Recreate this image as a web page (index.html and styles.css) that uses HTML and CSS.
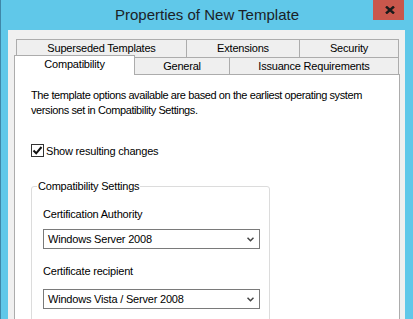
FILE: index.html
```html
<!DOCTYPE html>
<html>
<head>
<meta charset="utf-8">
<link rel="stylesheet" href="styles.css">
</head>
<body>
<div class="window">
  <div class="titlebar">
    <span class="spacer"></span>
    <div class="title">Properties of New Template</div>
    <button class="close" aria-label="Close">
      <svg width="10" height="8" viewBox="0 0 10 8"><path d="M1 0.5 L9 7.5 M9 0.5 L1 7.5" stroke="#1a1a1a" stroke-width="2.4" fill="none"/></svg>
    </button>
  </div>
  <div class="client">
    <div class="tabs">
      <div class="tabrow back">
        <div class="tab w-superseded">Superseded Templates</div>
        <div class="tab w-ext">Extensions</div>
        <div class="tab w-sec">Security</div>
      </div>
      <div class="tabrow front">
        <div class="tab selected w-compat">Compatibility</div>
        <div class="tab w-general">General</div>
        <div class="tab w-issuance">Issuance Requirements</div>
      </div>
    </div>
    <div class="panel">
      <p class="intro">The template options available are based on the earliest operating system<br>versions set in Compatibility Settings.</p>
      <label class="check">
        <span class="box"><svg width="11" height="11" viewBox="0 0 11 11"><path d="M1.5 5.5 L4.2 8.3 L9.5 2" stroke="#111" stroke-width="2" fill="none"/></svg></span>
        <span>Show resulting changes</span>
      </label>
      <fieldset class="group">
        <legend>Compatibility Settings</legend>
        <div class="field-label first">Certification Authority</div>
        <div class="combo first-combo">
          <span>Windows Server 2008</span>
          <svg width="7" height="5" viewBox="0 0 7 5"><path d="M0.5 0.8 L3.5 3.8 L6.5 0.8" stroke="#444" stroke-width="1.5" fill="none"/></svg>
        </div>
        <div class="field-label second">Certificate recipient</div>
        <div class="combo second-combo">
          <span>Windows Vista / Server 2008</span>
          <svg width="7" height="5" viewBox="0 0 7 5"><path d="M0.5 0.8 L3.5 3.8 L6.5 0.8" stroke="#444" stroke-width="1.5" fill="none"/></svg>
        </div>
      </fieldset>
    </div>
  </div>
</div>
</body>
</html>
```
FILE: styles.css
```css
html, body {
  margin: 0;
  padding: 0;
}
body {
  font-family: "Liberation Sans", Arial, sans-serif;
  font-size: 11px;
  letter-spacing: -0.2px;
  color: #000;
}
.window {
  width: 413px;
  height: 319px;
  box-sizing: border-box;
  overflow: hidden;
  background: #60c8e9;
  border-left: 1px solid #3f87a8;
  display: flex;
  flex-direction: column;
}
.titlebar {
  height: 30px;
  flex: none;
  display: grid;
  grid-template-columns: 1fr auto 1fr;
  align-items: start;
}
.title {
  font-size: 15px;
  letter-spacing: 0;
  line-height: 30px;
  color: #1b2227;
}
.close {
  justify-self: end;
  margin-right: 9px;
  width: 31px;
  height: 20px;
  border: none;
  padding: 0 0 0 3px;
  background: #c9574c;
  display: flex;
  align-items: center;
  justify-content: center;
}
.client {
  flex: 1;
  margin: 0 8px 0 7px;
  padding: 9px 5px 0 6px;
  background: #f0f0f0;
  display: flex;
  flex-direction: column;
  min-height: 0;
}
.tabrow {
  display: flex;
  margin-left: 2px;
}
.tab {
  box-sizing: border-box;
  flex: none;
  border: 1px solid #acacac;
  background: #efefef;
  text-align: center;
  white-space: nowrap;
}
.tab + .tab {
  margin-left: -1px;
}
.back .tab {
  height: 19px;
  line-height: 17px;
}
.front {
  margin-top: -1px;
  align-items: flex-end;
}
.front .tab {
  height: 17px;
  border-bottom: none;
  line-height: 17px;
}
.front .tab.selected {
  position: relative;
  z-index: 2;
  height: 20px;
  margin: -2px 0 -1px -2px;
  background: #fff;
}
.w-superseded { width: 171px; }
.w-ext { width: 114px; }
.w-sec { width: 100px; }
.w-compat { width: 121px; }
.w-general { width: 96px; }
.w-issuance { width: 170px; }

.panel {
  flex: 1;
  width: 386px;
  box-sizing: border-box;
  border: 1px solid #acacac;
  border-bottom: none;
  background: #fff;
  padding: 13px 0 0 16px;
}
.intro {
  margin: 0;
  line-height: 15px;
  letter-spacing: -0.4px;
}
.check {
  display: flex;
  align-items: center;
  height: 15px;
  margin-top: 25px;
  gap: 2px;
}
.box {
  width: 13px;
  height: 13px;
  box-sizing: border-box;
  border: 1px solid #333;
  background: #fff;
  display: flex;
  align-items: center;
  justify-content: center;
}
.group {
  margin: 21px 0 0 0;
  width: 239px;
  box-sizing: border-box;
  min-width: 0;
  padding: 0 9px 40px 11px;
  border: 1px solid #dcdcdc;
  border-radius: 3px;
}
.group legend {
  padding: 0 1px;
  margin-left: -6px;
  line-height: 15px;
}
.field-label {
  line-height: 15px;
}
.field-label.first {
  margin-top: 13px;
}
.field-label.second {
  margin-top: 15px;
}
.combo {
  height: 20px;
  box-sizing: border-box;
  border: 1px solid #7a7a7a;
  background: #fff;
  display: flex;
  align-items: center;
  justify-content: space-between;
  padding: 0 5px 0 4px;
}
.first-combo { margin-top: 7px; }
.second-combo { margin-top: 10px; }
```
